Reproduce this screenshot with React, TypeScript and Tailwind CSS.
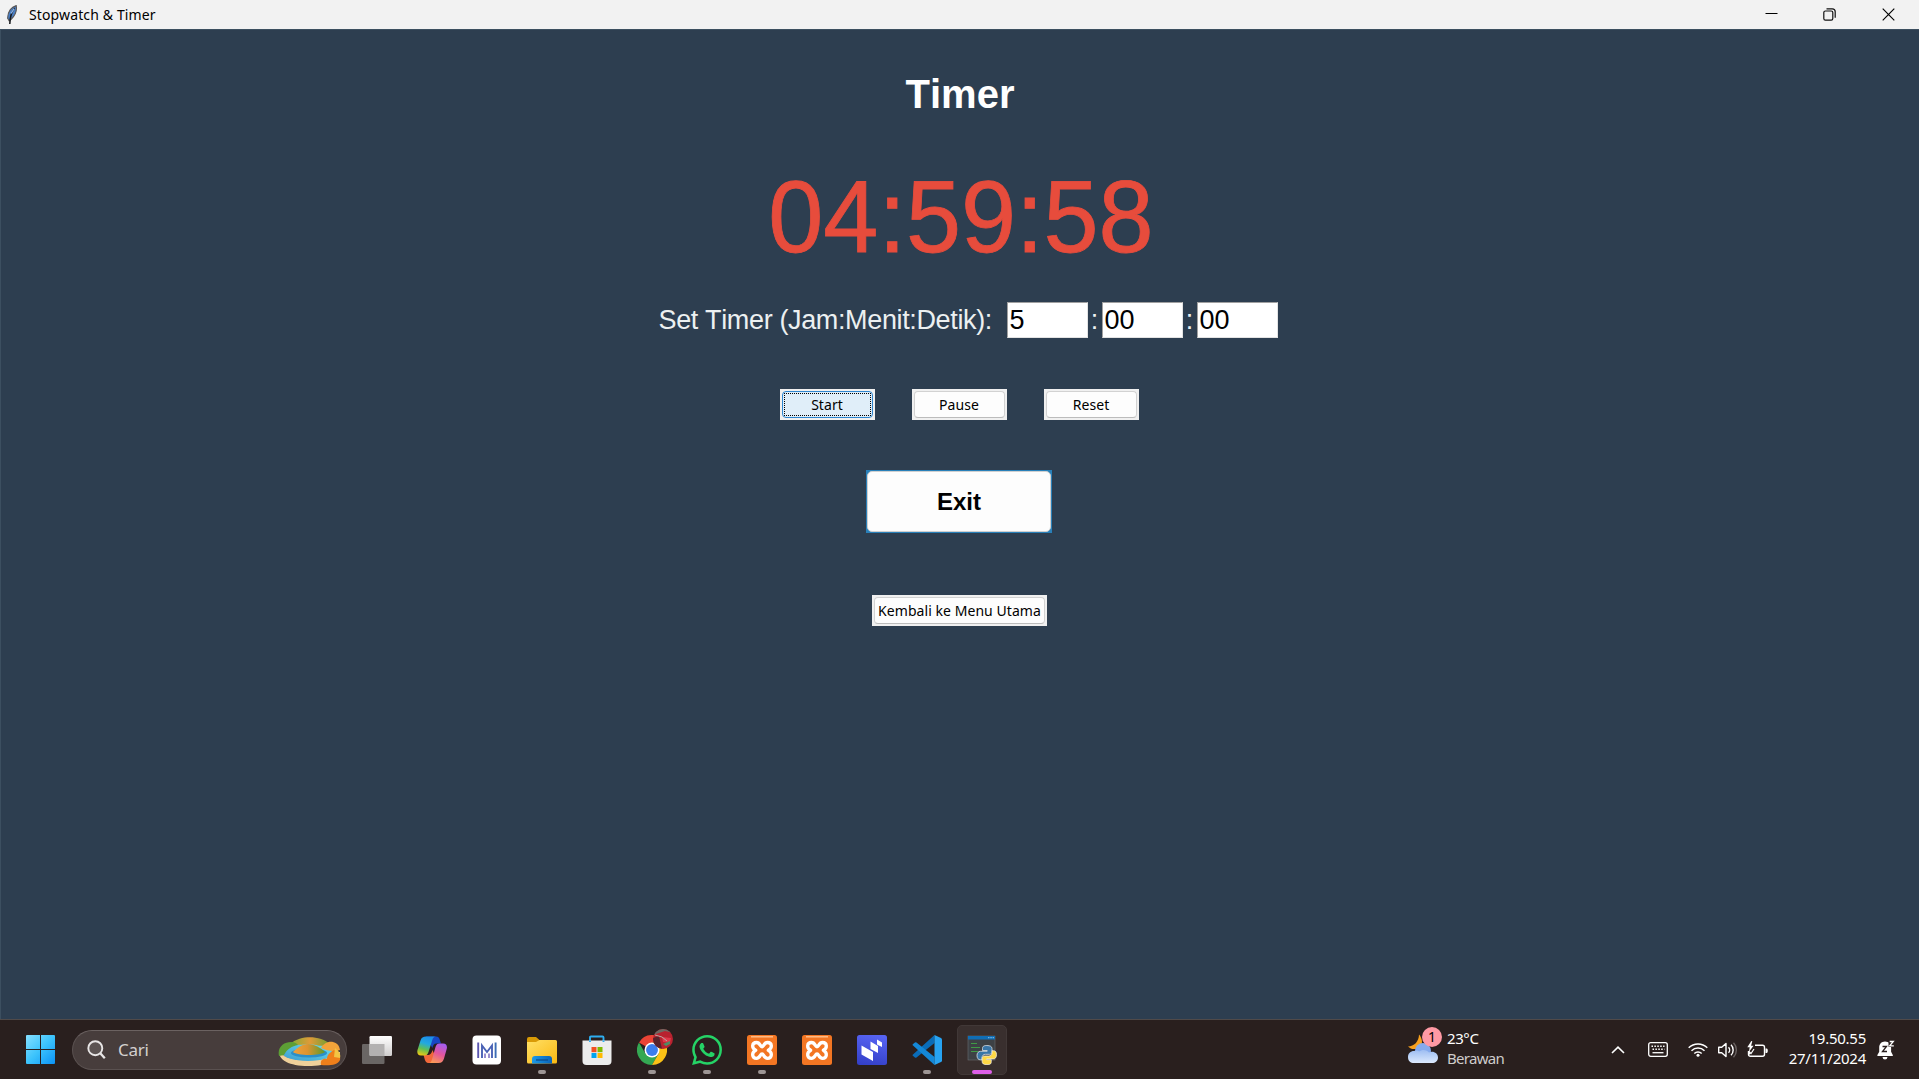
import type { ReactNode } from "react";

const seg = "font-['Noto_Sans',sans-serif]";
const arial = "font-['Liberation_Sans',sans-serif] [font-kerning:none]";

function TitleBar() {
  return (
    <header className="flex h-[29px] shrink-0 items-center bg-[#f2f2f2] text-black">
      <svg className="ml-[6px] h-5 w-3" viewBox="0 0 12 20">
        <path d="M10.2 .6C5.5 2 1.6 6.5 1.6 13.2L3.2 16l2.2-2C9 10.5 11.2 6 10.2.6Z" fill="#4a7fc4" stroke="#5a5654" strokeWidth="1.1" />
        <path d="M8.6 3C5.4 7 4 11 3.8 19" fill="none" stroke="#16181c" strokeWidth="1.5" />
        <path d="M8.2 3.6 5 8.4" stroke="#8db6ea" strokeWidth="1.3" />
      </svg>
      <span className={`${seg} ml-[11px] whitespace-nowrap text-[14px] tracking-[0.13px]`}>Stopwatch &amp; Timer</span>
      <div className="ml-auto flex h-full items-center">
        <svg className="mr-[45px] h-[13px] w-[13px]" viewBox="0 0 13 13"><path d="M.5 5.500h12" stroke="#000" strokeWidth="1" /></svg>
        <svg className="mr-[46px] h-[13px] w-[13px]" viewBox="0 0 13 13" fill="none" stroke="#111" strokeWidth="1.2">
          <rect x=".8" y="3" width="9" height="9.2" rx="1.6" />
          <path d="M3.5.9h5.8a2.9 2.9 0 0 1 2.9 2.9v6" />
        </svg>
        <svg className="mr-[24px] h-[13px] w-[13px]" viewBox="0 0 13 13"><path d="M.7.7 12.3 12.3M12.3.7.7 12.3" stroke="#000" strokeWidth="1.15" /></svg>
      </div>
    </header>
  );
}

function SmallButton({ children, active, width }: { children: ReactNode; active?: boolean; width: string }) {
  return (
    <button className={`${width} h-[31px] bg-[#f0f0f0] p-[2px]`}>
      <span
        className={`flex h-full w-full items-center justify-center rounded-[4px] border ${
          active ? "border-[#2f86cf] bg-[#e0eef9] p-[1px]" : "border-[#d2d2d2] border-b-[#bcbcbc] bg-[#fdfdfd]"
        }`}
      >
        <span className={`${seg} flex h-full w-full items-center justify-center whitespace-nowrap text-[14px] tracking-[0.06px] text-black ${active ? "border border-dotted border-black" : ""}`}>
          {children}
        </span>
      </span>
    </button>
  );
}

function Entry({ value }: { value: string }) {
  return (
    <div className={`${arial} flex h-9 w-[81px] items-center border border-[#a0a0a0] border-b-[#e3e3e3] border-r-[#e3e3e3] bg-white pl-[2px] text-[27px] leading-none text-black`}>
      {value}
    </div>
  );
}

function Main() {
  return (
    <main className="flex flex-1 flex-col items-center border-l border-t border-[#3c4f60] bg-[#2d3e50]">
      <h1 className={`${arial} mt-[41px] text-[40px] font-bold leading-[46px] text-white`}>Timer</h1>
      <div className={`${arial} ml-[2px] mt-[43px] origin-center scale-y-[1.025] text-[99px] leading-[114px] text-[#e74c3c] [-webkit-text-stroke:0.8px_#e74c3c]`}>04:59:58</div>
      <div className={`${arial} ml-[16px] mt-[28px] flex h-9 items-center text-[27px] text-[#ecf0f1]`}>
        <span className="mr-[14px] w-[334px] whitespace-nowrap tracking-[-0.36px]">Set Timer (Jam:Menit:Detik):</span>
        <Entry value="5" />
        <span className="w-[14px] text-center">:</span>
        <Entry value="00" />
        <span className="w-[14px] text-center">:</span>
        <Entry value="00" />
      </div>
      <div className="mr-[2px] mt-[51px] flex gap-[37px]">
        <SmallButton active width="w-[95px]">Start</SmallButton>
        <SmallButton width="w-[95px]">Pause</SmallButton>
        <SmallButton width="w-[95px]">Reset</SmallButton>
      </div>
      <button className="mr-[2px] mt-[50px] h-[63px] w-[186px] bg-[#2980b9] p-[1px]">
        <span className={`${arial} flex h-full w-full items-center justify-center rounded-[5px] border border-[#d0d0d0] bg-[#fdfdfd] text-[24px] font-bold text-black`}>Exit</span>
      </button>
      <div className="mr-[1px] mt-[62px] flex">
        <SmallButton width="w-[175px]">Kembali ke Menu Utama</SmallButton>
      </div>
    </main>
  );
}

function TaskItem({ children, running, active }: { children: ReactNode; running?: boolean; active?: boolean }) {
  return (
    <div className="flex w-[55px] justify-center">
      <div className={`relative flex h-[50px] w-[50px] items-center justify-center rounded-[5px] ${active ? "border border-[#413837] bg-[#392f2e]" : ""}`}>
        {children}
        {running && <span className="absolute bottom-[1px] h-1 w-2 rounded-full bg-[#9d9594]" />}
        {active && <span className="absolute bottom-0 h-1 w-5 rounded-full bg-[#de5fe8]" />}
      </div>
    </div>
  );
}

const icon = "h-[30px] w-[30px]";

function Xampp() {
  return (
    <svg className={icon} viewBox="0 0 30 30">
      <rect width="30" height="30" rx="2.5" fill="#f37623" />
      <path d="M4 1.8h22" stroke="#ffc18f" strokeWidth="1.4" />
      <path
        d="M15 11.800C13 11.800 13.300 7.500 9.500 7.500 4.800 7.500 4.300 13 8.700 15.300 4.300 17.500 4.800 23.300 9.500 23.300c3.800 0 3.500-4.300 5.500-4.300s1.700 4.300 5.500 4.300c4.700 0 5.200-5.800.8-8 4.400-2.300 3.900-7.800-.8-7.800-3.800 0-3.500 4.300-5.500 4.300Z"
        fill="none"
        stroke="#fff"
        strokeWidth="3.300"
        strokeLinejoin="round"
      />
    </svg>
  );
}

function Taskbar() {
  return (
    <footer className={`${seg} flex h-[60px] shrink-0 items-center border-t border-[#504a49] bg-[#291f1e] text-white`}>
      <svg className="ml-[26px] h-[29px] w-[29px] shrink-0" viewBox="0 0 29 29">
        <defs>
          <linearGradient id="win" gradientUnits="userSpaceOnUse" x1="0" y1="0" x2="29" y2="29">
            <stop stopColor="#86e0ff" />
            <stop offset=".5" stopColor="#3cc3fc" />
            <stop offset="1" stopColor="#0b92f5" />
          </linearGradient>
        </defs>
        <path d="M1 0h13v14H0V1Q0 0 1 0ZM15 0h13q1 0 1 1v13H15ZM0 15h14v14H1q-1 0-1-1ZM15 15h14v13q0 1-1 1H15Z" fill="url(#win)" />
      </svg>

      <div className="ml-[17px] flex h-10 w-[275px] shrink-0 items-center rounded-full border border-[#5a5150] border-t-[#6b6261] bg-[#473d3c] pr-1">
        <svg className="ml-[14px] h-5 w-5" viewBox="0 0 20 20" fill="none" stroke="#e8e6e6">
          <circle cx="8.300" cy="8.200" r="7" strokeWidth="1.900" fill="#5c5453" />
          <path d="m13.300 13.300 4.500 5" strokeWidth="2.300" />
        </svg>
        <span className="ml-[11px] text-[17px] tracking-[-0.3px] text-[#d3d0cf]">Cari</span>
        <svg className="ml-auto mt-1 h-[30px] w-[64px]" viewBox="0 0 64 30">
          <defs>
            <linearGradient id="hill" x1="0" x2="1">
              <stop stopColor="#f0a23c" />
              <stop offset=".45" stopColor="#dd9430" />
              <stop offset="1" stopColor="#5c9a2e" />
            </linearGradient>
            <linearGradient id="back" x1="0" x2="1">
              <stop stopColor="#7fae35" />
              <stop offset=".5" stopColor="#e09a38" />
              <stop offset="1" stopColor="#6da032" />
            </linearGradient>
            <linearGradient id="lake" x1="0" y1="1" x2="1" y2="0">
              <stop stopColor="#3a9bd2" />
              <stop offset="1" stopColor="#6fdfeb" />
            </linearGradient>
          </defs>
          <path d="M1 15c0 8 10 14 29 14s32-6 32-14Z" fill="#efd09a" />
          <ellipse cx="31" cy="15" rx="29" ry="8.500" fill="#dcb878" />
          <ellipse cx="30" cy="15.500" rx="26" ry="8.500" fill="url(#lake)" />
          <path d="M12 7C18 2 25 .3 32 .3S48 3 52 7c-5 2-9 2.500-14 1-8-2-15 1-26-1Z" fill="url(#back)" />
          <path d="M1 19C-1 10 6 5 13 5c4 0 6 1.500 7 3C14 9 9 12 6 18Z" fill="#5d9f35" />
          <path d="M43 11c2-4 7-7 12-6 4 1 6 3 7 8-6 2-13 1-19-2Z" fill="#f2a33a" />
          <ellipse cx="31" cy="16" rx="18" ry="4.500" fill="#2b8fca" />
          <path d="M15 15c4-4 9-8 15-8s13 4 17 8c-4 4-28 4-32 0Z" fill="url(#hill)" />
          <path d="M43 28c-1-5 2-7 6-6 0-5 4-7 7-9 4 2 7 6 6 10-2 5-11 6-19 5Z" fill="#ef7f1a" />
          <path d="M57 11c4 3 6 6 5 10l-6-1Z" fill="#f3c443" />
        </svg>
      </div>

      <div className="ml-[2px] flex shrink-0">
        <TaskItem>
          <svg className={icon} viewBox="0 0 30 30">
            <defs><linearGradient id="tv" x1="0" y1="0" x2="0" y2="1"><stop stopColor="#fff" /><stop offset="1" stopColor="#cfcdcd" /></linearGradient></defs>
            <rect x="0" y="9" width="22.500" height="20" rx="1.200" fill="#6a6665" />
            <rect x="7.500" y="1" width="22.500" height="20" rx="1.200" fill="url(#tv)" />
            <path d="M7.500 9h15v12H8.700q-1.200 0-1.200-1.200Z" fill="#b3b1b1" />
          </svg>
        </TaskItem>
        <TaskItem>
          <svg className={icon} viewBox="0 0 30 30">
            <defs>
              <linearGradient id="c1" x1=".5" y1="0" x2=".2" y2="1"><stop stopColor="#1c8fe8" /><stop offset=".35" stopColor="#22a9e0" /><stop offset=".65" stopColor="#5fbf55" /><stop offset="1" stopColor="#f2c811" /></linearGradient>
              <linearGradient id="c2" x1=".7" y1="0" x2=".3" y2="1"><stop stopColor="#a45df0" /><stop offset=".5" stopColor="#e3559c" /><stop offset="1" stopColor="#fc9a55" /></linearGradient>
            </defs>
            <path d="M9 1.500h10c2.500 0 3.300 1.500 4 4l1 3h-4.500c-2.500 0-3.500 2-4.200 4.500Z" fill="#1747c4" />
            <path d="M21 28H12c-3 0-3.800-2-4.500-4.500L6.500 20h4c3 0 4-1.500 5-5Z" fill="#f2683a" />
            <path d="M19 1.500c-2 0-3 1.500-3.700 3.500L11.500 17c-.8 2.500-2 3.500-4 3.500H4C.8 20.500-.2 18 .5 15L3.500 5.500C4.500 2.500 6 1.500 9 1.500Z" fill="url(#c1)" />
            <path d="M11.500 28c2 0 2.800-1 3.500-3.500L18.500 12c.8-2.500 2-3.500 4-3.500H26c3.500 0 4.500 2.500 3.700 5.500L27 23.500c-1 3-2.500 4.500-5.500 4.500Z" fill="url(#c2)" />
          </svg>
        </TaskItem>
        <TaskItem>
          <svg className={icon} viewBox="0 0 30 30">
            <rect x=".5" y=".5" width="28.500" height="29" rx="4" fill="#fff" />
            <g fill="none" strokeWidth="1.900">
              <path d="M6.200 7.500v15.500" stroke="#5a55b0" />
              <path d="M23.600 7.500v15.500" stroke="#3c6db5" />
              <path d="M10 23V10.500l5 6.500 5-6.500V23" stroke="#4a62b5" />
              <path d="M13 23v-4.500M17 23v-4.500" strokeWidth="1.500" stroke="#7a6cc0" />
            </g>
          </svg>
        </TaskItem>
        <TaskItem running>
          <svg className={icon} viewBox="0 0 30 30">
            <defs>
              <linearGradient id="fold" x1="0" y1="0" x2="1" y2="1"><stop stopColor="#ffe066" /><stop offset="1" stopColor="#fbb912" /></linearGradient>
              <linearGradient id="fb" x1="0" x2="1"><stop stopColor="#1b9ae8" /><stop offset="1" stopColor="#0a63b8" /></linearGradient>
            </defs>
            <path d="M0 4q0-2 2-2h7l3.500 3H28v7H0Z" fill="#d99a06" />
            <path d="M0 7h9l3.500-2H28.500q1.500 0 1.500 1.500V27q0 1.500-1.500 1.500h-27Q0 28.500 0 27Z" fill="url(#fold)" />
            <path d="M5 28.500V24q0-3 3-3h14q3 0 3 3v4.500Z" fill="url(#fb)" />
            <path d="M9 25h12" stroke="#0b4c8f" strokeWidth="1.300" />
          </svg>
        </TaskItem>
        <TaskItem>
          <svg className={icon} viewBox="0 0 30 30">
            <path d="M8 7V2.500q0-1 1-1h11.500q1 0 1 1V7" fill="none" stroke="#2eaef0" strokeWidth="1.900" />
            <path d="M.5 5.500h29V26q0 4-4 4h-21q-4 0-4-4Z" fill="#ececec" />
            <path d="M8 5.500V7M21.500 5.500V7" stroke="#2eaef0" strokeWidth="1.900" />
            <path d="M9.500 12H14.500v5.200H9.500Z" fill="#f25022" /><path d="M15.500 12h5v5.200h-5Z" fill="#7fba00" />
            <path d="M9.500 18H14.500v5H9.500Z" fill="#00a4ef" /><path d="M15.500 18h5v5h-5Z" fill="#ffb900" />
          </svg>
        </TaskItem>
        <TaskItem running>
          <svg className={icon} viewBox="0 0 48 48">
            <path d="M24 24 3.200 12A24 24 0 0 1 44.800 12H24Z" fill="#ea4335" />
            <path d="M3.200 12A24 24 0 0 0 24 48L34.400 30 13.600 30Z" fill="#34a853" />
            <path d="M44.800 12A24 24 0 0 1 24 48L34.400 30 34.400 18 24 12Z" fill="#fbc116" />
            <circle cx="24" cy="24" r="12" fill="#fff" />
            <circle cx="24" cy="24" r="9.500" fill="#3b7ded" />
          </svg>
          <svg className="absolute left-[26px] top-[4px] h-5 w-5" viewBox="0 0 20 20">
            <defs><clipPath id="av"><circle cx="10" cy="10" r="10" /></clipPath></defs>
            <g clipPath="url(#av)">
              <rect width="20" height="20" fill="#b8222f" />
              <path d="M0 0h20v4L12 2 0 6Z" fill="#6d6a63" />
              <path d="M0 9 6 7l3 13H0Z" fill="#57232c" />
              <path d="M9 8l9 1-1 5-7-1Z" fill="#e0384a" />
              <path d="M2 6 9 8l5 4" stroke="#b9aaa5" strokeWidth="1" fill="none" />
              <path d="m10 15 7-3v3l-4 2Z" fill="#4d8b62" />
            </g>
          </svg>
        </TaskItem>
        <TaskItem running>
          <svg className={icon} viewBox="0 0 24 24" fill="#25d366">
            <path d="M17.472 14.382c-.297-.149-1.758-.867-2.030-.967-.273-.099-.471-.148-.670.150-.197.297-.767.966-.940 1.164-.173.199-.347.223-.644.075-.297-.150-1.255-.463-2.390-1.475-.883-.788-1.480-1.761-1.653-2.059-.173-.297-.018-.458.130-.606.134-.133.298-.347.446-.520.149-.174.198-.298.298-.497.099-.198.050-.371-.025-.520-.075-.149-.669-1.612-.916-2.207-.242-.579-.487-.500-.669-.510-.173-.008-.371-.010-.570-.010-.198 0-.520.074-.792.372-.272.297-1.040 1.016-1.040 2.479 0 1.462 1.065 2.875 1.213 3.074.149.198 2.096 3.200 5.077 4.487.709.306 1.262.489 1.694.625.712.227 1.360.195 1.871.118.571-.085 1.758-.719 2.006-1.413.248-.694.248-1.289.173-1.413-.074-.124-.272-.198-.570-.347" />
            <path d="M12.050 0C5.495 0 .160 5.335.157 11.892c0 2.096.547 4.142 1.588 5.945L.057 24l6.305-1.654a11.882 11.882 0 0 0 5.683 1.448h.005c6.554 0 11.890-5.335 11.893-11.893A11.821 11.821 0 0 0 12.050 0Zm0 21.785a9.870 9.870 0 0 1-5.030-1.378l-.361-.214-3.741.982.998-3.648-.235-.374a9.860 9.860 0 0 1-1.510-5.260c.001-5.450 4.436-9.884 9.888-9.884a9.825 9.825 0 0 1 9.880 9.892c-.003 5.450-4.437 9.884-9.889 9.884Z" />
          </svg>
        </TaskItem>
        <TaskItem running><Xampp /></TaskItem>
        <TaskItem><Xampp /></TaskItem>
        <TaskItem>
          <svg className={icon} viewBox="0 0 30 30">
            <defs><linearGradient id="lar" x1=".5" y1="0" x2=".3" y2="1"><stop stopColor="#5663f2" /><stop offset="1" stopColor="#3440c8" /></linearGradient></defs>
            <rect width="30" height="30" rx="2.500" fill="url(#lar)" />
            <path d="M4.500 10.500 16 17v9L4.500 19.500ZM13.500 6.500 21 11v7l-7.500-4ZM20 4.500l5 3V12l-5-2.500Z" fill="#fff" />
          </svg>
        </TaskItem>
        <TaskItem running>
          <svg className={icon} viewBox="0 0 30 30">
            <path d="M1 19.500 22.500 0v8L4.500 22.500q-.800.600-1.600 0L.8 20.800q-.800-.700.200-1.300Z" fill="#0a6cb8" />
            <path d="M1 10.500 22.500 30v-8L4.500 7.500q-.800-.600-1.600 0L.8 9.200q-.800.700.200 1.300Z" fill="#1488d8" />
            <path d="M22.500 0 29 3q1 .5 1 1.500v21q0 1-1 1.500l-6.500 3Z" fill="#27a3f2" />
          </svg>
        </TaskItem>
        <TaskItem active>
          <svg className={icon} viewBox="0 0 30 30">
            <rect x="1" y="1" width="27" height="24" fill="#3d4145" stroke="#696d70" strokeWidth=".6" />
            <rect x="1" y="1" width="27" height="3.500" fill="#0f6db5" />
            <path d="M21 2.700h6" stroke="#8dbfe6" strokeDasharray="1.500 .8" />
            <path d="M4 8.500h6M4 12.500h9M4 16.500h7" stroke="#3f9b46" strokeWidth="1.200" />
            <g stroke="#f4f4f4" strokeWidth=".7">
              <path d="M19.800 10.500c-3.600 0-4.300 1.300-4.300 3v2h4.700v.8h-6.700c-2 0-3.500 1.500-3.500 4.200s1.300 4.300 3.200 4.300h1.900v-2.500c0-1.700 1.400-3 3.200-3h4.400c1.400 0 2.300-1.100 2.300-2.500v-3.300c0-1.900-1.700-3-5.200-3Z" fill="#3976a8" />
              <path d="M20 29.700c3.600 0 4.300-1.300 4.300-3v-2h-4.600v-.8h6.600c2 0 3.200-1.500 3.200-4.200s-1-4-3-4h-1.500v2.300c0 1.700-1.500 3-3.200 3h-4.400c-1.400 0-2.300 1.100-2.300 2.500v3.200c0 1.900 1.600 3 4.900 3Z" fill="#ffd845" />
            </g>
          </svg>
        </TaskItem>
      </div>

      <div className="ml-auto flex items-center">
        <div className="relative h-10 w-[39px]">
          <svg className="absolute left-0 top-[4px] h-[30px] w-[30px]" viewBox="0 0 30 30">
            <defs><linearGradient id="cl" x1="0" y1="0" x2="0" y2="1"><stop stopColor="#9dbdf2" /><stop offset="1" stopColor="#dce9fd" /></linearGradient></defs>
            <path d="M11 .5c3 3 5 10 0 13-4 2.500-8 2-11-1 6 0 11-5 11-12Z" fill="#f7a01d" />
            <circle cx="15" cy="17" r="8" fill="#85aaed" />
            <path d="M6 17c2-1 4-.5 5 .5 3-2.500 8-2 10 1 4-2 9 .5 9 5 0 3.500-2.500 5.500-6 5.500H6c-3.500 0-6-2-6-6 0-3.500 2.500-6 6-6Z" fill="url(#cl)" />
          </svg>
          <span className="absolute left-[14px] top-[-3px] flex h-5 w-5 items-center justify-center rounded-full bg-[#ff99a4] text-[14px] leading-none text-black">1</span>
        </div>
        <div className="mb-[3px] w-[58px] text-[15px] leading-5 tracking-[-0.4px]">
          <div>23°C</div>
          <div className="tracking-[-0.7px] text-[#cfcccb]">Berawan</div>
        </div>
        <svg className="ml-[106px] h-2 w-[14px]" viewBox="0 0 14 8"><path d="m1 7 6-5.800L13 7" fill="none" stroke="#fff" strokeWidth="1.600" /></svg>
        <svg className="ml-[23px] h-[15px] w-5" viewBox="0 0 20 15" fill="none" stroke="#fff">
          <rect x=".7" y=".7" width="18.600" height="13.600" rx="2" strokeWidth="1.300" />
          <path d="M3.500 4.300h13M4.500 7.300h12" strokeWidth="1.500" strokeDasharray="1.500 1.400" />
          <path d="M4.500 10.700h11" strokeWidth="1.300" />
        </svg>
        <svg className="ml-5 h-[15px] w-5" viewBox="0 0 20 15" fill="none" stroke="#fff" strokeWidth="1.500">
          <path d="M.7 5.800a13.300 13.300 0 0 1 18.600 0M3.500 8.700a9.300 9.300 0 0 1 13 0M6.300 11.500a5.300 5.300 0 0 1 7.400 0" />
          <circle cx="10" cy="13.200" r="1.500" fill="#fff" stroke="none" />
        </svg>
        <svg className="ml-[10px] h-4 w-5" viewBox="0 0 20 16" fill="none" stroke="#fff" strokeWidth="1.400">
          <path d="M.7 5.300h3L8 1.400v13.200L3.700 10.700h-3Z" strokeLinejoin="round" />
          <path d="M10.500 5.200a4 4 0 0 1 0 5.600M13 2.800a7.300 7.300 0 0 1 0 10.400" />
          <path d="M15.500.8a10.400 10.400 0 0 1 0 14.400" stroke="#6a6261" />
        </svg>
        <svg className="ml-[9px] h-[17px] w-[21px]" viewBox="0 0 21 17" fill="none" stroke="#fff" strokeWidth="1.400">
          <path d="M8 4.200h7.500q2 0 2 2v7q0 2-2 2h-12q-2 0-2-2V10" />
          <path d="M18.500 7.500v4.600h1.400q.9-.5.900-2.300t-.9-2.300Z" fill="#fff" stroke="none" />
          <path d="M4.300 0 .3 6.300h2.400L1.900 11 6.500 4.700H4.100L5.300.3Z" fill="#fff" stroke="none" />
          <path d="M2.500 13.500V11l1.500 1.500 3-4.500" strokeWidth="1.200" />
        </svg>
        <div className="mb-[3px] ml-[16px] w-[82px] text-right text-[15px] leading-5 tracking-[-0.25px]">
          <div>19.50.55</div>
          <div>27/11/2024</div>
        </div>
        <svg className="ml-[11px] mr-[24px] h-[20px] w-[18px]" viewBox="0 0 18 20">
          <path d="M8 1.500c-3.800 0-5.800 2.800-5.800 6v4.300L.4 15v1h15.400v-1l-1.700-3.200V7.500c0-3.200-2.200-6-6.100-6Z" fill="#fff" />
          <path d="M5.500 17h5q-.3 2.500-2.500 2.500T5.500 17Z" fill="#fff" />
          <path d="M5.500 6.500h4l-4 5h4.500" fill="none" stroke="#291f1e" strokeWidth="1.300" />
          <path d="M11.500 0H18v7h-6.500Z" fill="#291f1e" />
          <path d="M12.700 1.500h3.600l-3.600 4.300h4.100" fill="none" stroke="#fff" strokeWidth="1.300" />
        </svg>
      </div>
    </footer>
  );
}

export default function App() {
  return (
    <div className="flex h-[1079px] w-[1919px] flex-col overflow-hidden">
      <TitleBar />
      <Main />
      <Taskbar />
    </div>
  );
}
